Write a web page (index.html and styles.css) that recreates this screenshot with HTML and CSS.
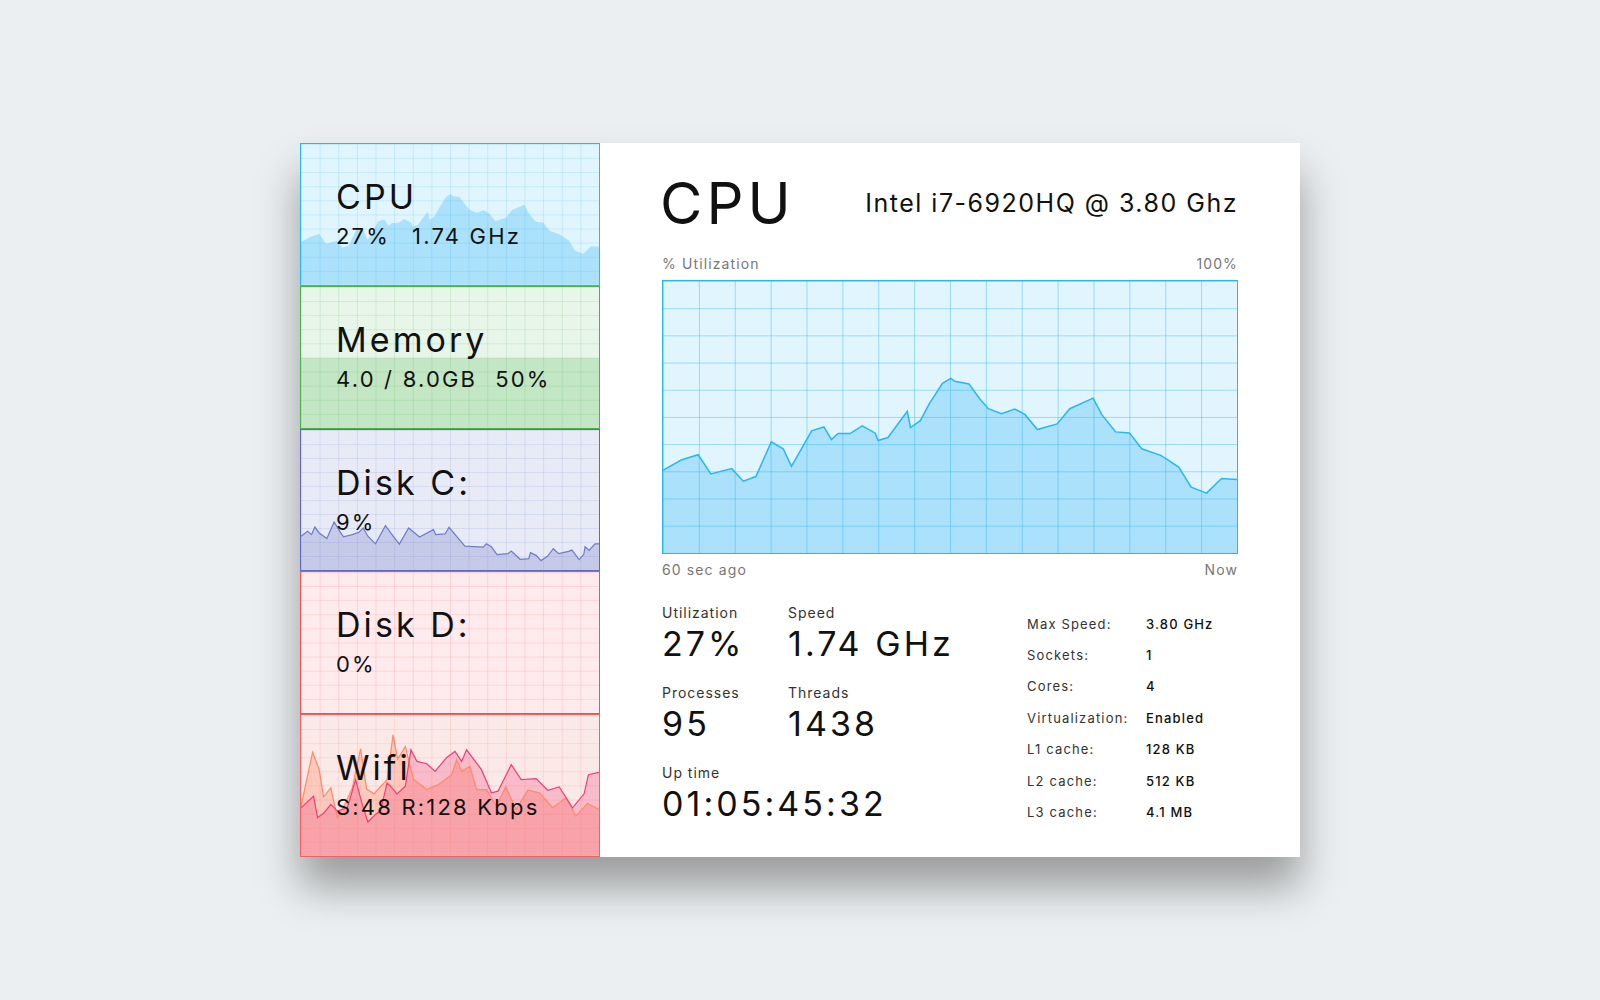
FILE: index.html
```html
<!DOCTYPE html>
<html>
<head>
<meta charset="utf-8">
<title>Task Manager - CPU</title>
<link rel="stylesheet" href="styles.css">
</head>
<body>
<div class="page">
  <div class="card">
    <aside class="sidebar">
      <div class="panel cpu">
        <svg class="chart" viewBox="57 30 1452 822" preserveAspectRatio="none">
          <path class="fill" d="M57,852 L57,602 103,571 146,555 178,613 231,597 260,635 292,621 331,516 361,537 382,590 433,483 464,471 483,509 500,491 530,491 561,468 594,490 601,512 626,503 675,424 683,473 708,452 730,402 764,339 785,324 795,333 831,341 858,386 880,416 913,431 947,417 973,434 1004,479 1054,462 1086,416 1145,384 1167,434 1202,486 1237,489 1268,537 1316,557 1333,570 1362,593 1393,653 1432,671 1470,627 1509,630 L1509,852 Z"/>
        </svg>
        <div class="grid"></div>
        <div class="label">
          <div class="name">CPU</div>
          <div class="sub"><span class="gap">27%</span><span>1.74 GHz</span></div>
        </div>
      </div>
      <div class="panel mem">
        <div class="grid"></div>
        <div class="label">
          <div class="name">Memory</div>
          <div class="sub"><span class="gap2">4.0 / 8.0GB</span><span>50%</span></div>
        </div>
      </div>
      <div class="panel diskc">
        <svg class="chart" viewBox="30 27 900 428" preserveAspectRatio="none">
          <path class="fill" d="M30,455 L30,350 50,335 62,345 72,322 85,340 108,357 130,307 158,352 185,345 205,338 218,325 232,350 255,373 285,318 305,345 327,374 355,325 388,352 430,330 437,345 465,343 477,323 525,380 580,383 590,373 605,382 622,406 655,403 665,395 692,420 718,418 723,400 740,408 755,424 775,410 792,388 808,403 838,396 848,392 870,421 884,405 888,382 900,393 918,373 930,373 L930,455 Z"/>
          <polyline class="line" points="30,350 50,335 62,345 72,322 85,340 108,357 130,307 158,352 185,345 205,338 218,325 232,350 255,373 285,318 305,345 327,374 355,325 388,352 430,330 437,345 465,343 477,323 525,380 580,383 590,373 605,382 622,406 655,403 665,395 692,420 718,418 723,400 740,408 755,424 775,410 792,388 808,403 838,396 848,392 870,421 884,405 888,382 900,393 918,373 930,373"/>
        </svg>
        <div class="grid"></div>
        <div class="label">
          <div class="name">Disk C:</div>
          <div class="sub">9%</div>
        </div>
      </div>
      <div class="panel diskd">
        <div class="grid"></div>
        <div class="label">
          <div class="name">Disk D:</div>
          <div class="sub">0%</div>
        </div>
      </div>
      <div class="panel wifi">
        <svg class="chart" viewBox="30 45 900 425" preserveAspectRatio="none">
          <path class="fill-o" d="M30,470 L30,320 65,158 85,210 98,292 120,265 140,355 165,310 185,265 210,147 228,268 250,283 290,240 308,105 322,178 345,140 370,240 410,270 445,255 485,225 500,180 515,215 540,200 560,270 590,270 620,320 648,262 680,330 715,272 750,280 790,325 830,295 860,350 895,312 930,330 L930,470 Z"/>
          <path class="fill-p" d="M30,470 L30,325 68,290 80,355 100,340 120,315 140,335 170,325 195,240 215,315 232,368 255,345 270,335 290,250 300,260 320,283 345,260 362,150 380,185 410,192 435,215 470,173 495,155 515,185 530,150 575,210 605,280 625,275 665,195 695,240 740,237 775,272 810,262 850,325 885,283 898,225 930,218 L930,470 Z"/>
          <polyline class="line-o" points="30,320 65,158 85,210 98,292 120,265 140,355 165,310 185,265 210,147 228,268 250,283 290,240 308,105 322,178 345,140 370,240 410,270 445,255 485,225 500,180 515,215 540,200 560,270 590,270 620,320 648,262 680,330 715,272 750,280 790,325 830,295 860,350 895,312 930,330"/>
          <polyline class="line-p" points="30,325 68,290 80,355 100,340 120,315 140,335 170,325 195,240 215,315 232,368 255,345 270,335 290,250 300,260 320,283 345,260 362,150 380,185 410,192 435,215 470,173 495,155 515,185 530,150 575,210 605,280 625,275 665,195 695,240 740,237 775,272 810,262 850,325 885,283 898,225 930,218"/>
        </svg>
        <div class="grid"></div>
        <div class="label">
          <div class="name">Wifi</div>
          <div class="sub">S:48 R:128 Kbps</div>
        </div>
      </div>
    </aside>

    <main class="detail">
      <header class="head">
        <h1 class="title">CPU</h1>
        <div class="model">Intel i7-6920HQ @ 3.80 Ghz</div>
      </header>
      <div class="axis axis-top"><span>% Utilization</span><span>100%</span></div>
      <div class="graph">
        <svg class="chart" viewBox="57 30 1452 822" preserveAspectRatio="none">
          <path class="fill" d="M57,852 L57,602 103,571 146,555 178,613 231,597 260,635 292,621 331,516 361,537 382,590 433,483 464,471 483,509 500,491 530,491 561,468 594,490 601,512 626,503 675,424 683,473 708,452 730,402 764,339 785,324 795,333 831,341 858,386 880,416 913,431 947,417 973,434 1004,479 1054,462 1086,416 1145,384 1167,434 1202,486 1237,489 1268,537 1316,557 1333,570 1362,593 1393,653 1432,671 1470,627 1509,630 L1509,852 Z"/>
          <polyline class="line" points="57,602 103,571 146,555 178,613 231,597 260,635 292,621 331,516 361,537 382,590 433,483 464,471 483,509 500,491 530,491 561,468 594,490 601,512 626,503 675,424 683,473 708,452 730,402 764,339 785,324 795,333 831,341 858,386 880,416 913,431 947,417 973,434 1004,479 1054,462 1086,416 1145,384 1167,434 1202,486 1237,489 1268,537 1316,557 1333,570 1362,593 1393,653 1432,671 1470,627 1509,630"/>
        </svg>
        <div class="grid"></div>
      </div>
      <div class="axis axis-bottom"><span>60 sec ago</span><span>Now</span></div>

      <section class="stats">
        <div class="live">
          <div class="stat"><div class="k">Utilization</div><div class="v">27%</div></div>
          <div class="stat"><div class="k">Speed</div><div class="v">1.74 GHz</div></div>
          <div class="stat"><div class="k">Processes</div><div class="v">95</div></div>
          <div class="stat"><div class="k">Threads</div><div class="v">1438</div></div>
          <div class="stat wide"><div class="k">Up time</div><div class="v">01:05:45:32</div></div>
        </div>
        <dl class="specs">
          <dt>Max Speed:</dt><dd>3.80 GHz</dd>
          <dt>Sockets:</dt><dd>1</dd>
          <dt>Cores:</dt><dd>4</dd>
          <dt>Virtualization:</dt><dd>Enabled</dd>
          <dt>L1 cache:</dt><dd>128 KB</dd>
          <dt>L2 cache:</dt><dd>512 KB</dd>
          <dt>L3 cache:</dt><dd>4.1 MB</dd>
        </dl>
      </section>
    </main>
  </div>
</div>
</body>
</html>
```

FILE: styles.css
```css
* { box-sizing: border-box; }

html, body {
  margin: 0;
  padding: 0;
  background: #eceff1;
  font-family: Inter, "Noto Sans", sans-serif;
  color: #111;
}

.page {
  display: flex;
  justify-content: center;
  padding-top: 143px;
  height: 1000px;
}

.card {
  width: 1000px;
  height: 714px;
  display: flex;
  background: #fff;
  box-shadow: 0 30px 40px rgba(0, 0, 0, 0.35);
}

/* ---------- sidebar ---------- */
.sidebar {
  width: 300px;
  display: flex;
  flex-direction: column;
}

.panel {
  flex: 1;
  position: relative;
  border: 1px solid;
  padding: 36px 0 0 35px;
  overflow: hidden;
}

.panel .chart {
  position: absolute;
  inset: 0;
  width: 100%;
  height: 100%;
}

.grid {
  position: absolute;
  inset: 0;
  background-image:
    linear-gradient(to right, var(--grid) 1px, transparent 1px),
    linear-gradient(to bottom, var(--grid) 1px, transparent 1px);
  background-size: calc(100% / 16) calc(100% / 10);
}

.label {
  position: relative;
}

.name {
  font-size: 34px;
  line-height: 34px;
  letter-spacing: 0.09em;
}

.sub {
  margin-top: 11px;
  font-size: 22px;
  line-height: 22px;
  letter-spacing: 0.1em;
}

.gap { margin-right: 22px; }
.gap2 { margin-right: 18px; }

.cpu {
  border-color: #29b6f6;
  background: #e1f5fe;
  --grid: rgba(41, 182, 246, 0.18);
}
.cpu .fill { fill: #abe1fa; }

.mem {
  border-color: #4caf50;
  background: linear-gradient(to bottom,
    #e8f5e9 0, #e8f5e9 50%,
    #4caf50 50%, #4caf50 calc(50% + 1px),
    #c3e6c4 calc(50% + 1px), #c3e6c4 100%);
  --grid: rgba(76, 175, 80, 0.16);
}

.diskc {
  border-color: #5c6bc0;
  background: #e8eaf6;
  --grid: rgba(92, 107, 192, 0.13);
}
.diskc .fill { fill: #c5cae9; }
.diskc .line {
  fill: none;
  stroke: #6f7cc8;
  stroke-width: 1.2;
  vector-effect: non-scaling-stroke;
}

.diskd {
  border-color: #ef5350;
  background: #ffebee;
  --grid: rgba(239, 83, 80, 0.16);
}

.wifi {
  border-color: #f2615f;
  background: #fbe9e7;
  --grid: rgba(244, 96, 80, 0.14);
}
.wifi .fill-o { fill: rgba(255, 138, 101, 0.33); }
.wifi .fill-p { fill: rgba(236, 64, 122, 0.27); }
.wifi .line-o, .wifi .line-p {
  fill: none;
  stroke-width: 1.2;
  vector-effect: non-scaling-stroke;
}
.wifi .line-o { stroke: #ff8a65; }
.wifi .line-p { stroke: #ec407a; }

/* ---------- detail ---------- */
.detail {
  flex: 1;
  padding: 30px 62px 0 62px;
}

.head {
  height: 60px;
  display: flex;
  align-items: center;
  justify-content: space-between;
}

.title {
  margin: 0 0 0 -2px;
  font-weight: 400;
  font-size: 58px;
  line-height: 60px;
  letter-spacing: 0.07em;
}

.model {
  font-size: 25px;
  line-height: 30px;
  letter-spacing: 0.06em;
}

.axis {
  display: flex;
  justify-content: space-between;
  font-size: 14px;
  line-height: 16px;
  color: #777;
  letter-spacing: 0.08em;
}
.axis-top { margin-top: 23px; }
.axis-bottom { margin-top: 8px; }

.graph {
  margin-top: 8px;
  height: 274px;
  position: relative;
  border: 1px solid #29b6f6;
  background: #e1f5fe;
  --grid: rgba(41, 182, 246, 0.42);
}
.graph .chart {
  position: absolute;
  inset: 0;
  width: 100%;
  height: 100%;
}
.graph .fill { fill: #abe1fa; }
.graph .line {
  fill: none;
  stroke: #29b6f6;
  stroke-width: 1.5;
  vector-effect: non-scaling-stroke;
}

.stats {
  margin-top: 27px;
  display: grid;
  grid-template-columns: 365px 1fr;
}

.live {
  display: grid;
  grid-template-columns: 126px auto;
  row-gap: 23px;
  align-content: start;
}
.stat.wide { grid-column: 1 / span 2; }

.k {
  font-size: 14px;
  line-height: 16px;
  color: #333;
  letter-spacing: 0.07em;
}
.v {
  margin-top: 5px;
  font-size: 34px;
  line-height: 36px;
  letter-spacing: 0.09em;
}

.specs {
  margin: 3px 0 0 0;
  display: grid;
  grid-template-columns: 119px auto;
  grid-auto-rows: 31.4px;
  align-items: center;
  font-size: 13px;
  letter-spacing: 0.09em;
}
.specs dt { color: #333; }
.specs dd { margin: 0; font-weight: 500; color: #111; }
```
